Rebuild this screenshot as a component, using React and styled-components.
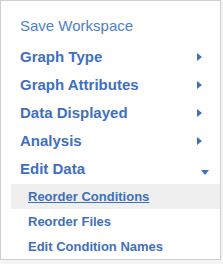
import React from "react";
import styled, { createGlobalStyle } from "styled-components";

const Global = createGlobalStyle`
  html, body { margin: 0; padding: 0; background: #f4f4f4; }
  body { font-family: "Liberation Sans", Arial, sans-serif; }
`;

const Panel = styled.nav`
  box-sizing: border-box;
  width: 221px;
  height: 260px;
  background: #fff;
  border: 1px solid #cfcfcf;
  padding-top: 10px;
  display: flex;
  flex-direction: column;
`;

const Row = styled.div`
  display: flex;
  align-items: center;
  height: 28px;
  padding-left: 19px;
  margin-bottom: ${(p) => (p.$gap ? "3px" : "0")};
  color: #4070bd;
  font-size: 15px;
  font-weight: ${(p) => (p.$bold ? 700 : 400)};
  cursor: pointer;
`;

const Label = styled.span`
  flex: 1;
  white-space: nowrap;
  color: ${(p) => (p.$light ? "#4f7fca" : "inherit")};
`;

const RightArrow = styled.span`
  width: 0;
  height: 0;
  border-left: 5px solid #4070bd;
  border-top: 4px solid transparent;
  border-bottom: 4px solid transparent;
  margin-right: 18px;
  margin-top: 2px;
`;

const DownArrow = styled.span`
  width: 0;
  height: 0;
  border-top: 5px solid #4070bd;
  border-left: 4.5px solid transparent;
  border-right: 4.5px solid transparent;
  margin-right: 11px;
  margin-top: 8px;
`;

const SubList = styled.div`
  margin-left: 10px;
  margin-top: 2px;
  display: flex;
  flex-direction: column;
`;

const SubItem = styled.div`
  height: 25px;
  display: flex;
  align-items: center;
  padding-left: 17px;
  font-size: 13px;
  font-weight: 700;
  color: #4070bd;
  background: ${(p) => (p.$active ? "#efefef" : "transparent")};
  text-decoration: ${(p) => (p.$active ? "underline" : "none")};
  white-space: nowrap;
  cursor: pointer;
`;

const items = [
  { label: "Graph Type", arrow: "right" },
  { label: "Graph Attributes", arrow: "right" },
  { label: "Data Displayed", arrow: "right" },
  { label: "Analysis", arrow: "right" },
  { label: "Edit Data", arrow: "down" },
];

const subItems = [
  { label: "Reorder Conditions", active: true },
  { label: "Reorder Files" },
  { label: "Edit Condition Names" },
];

export default function App() {
  return (
    <>
      <Global />
      <Panel>
        <Row $gap>
          <Label $light>Save Workspace</Label>
        </Row>
        {items.map((it) => (
          <Row key={it.label} $bold>
            <Label>{it.label}</Label>
            {it.arrow === "right" ? <RightArrow /> : <DownArrow />}
          </Row>
        ))}
        <SubList>
          {subItems.map((s) => (
            <SubItem key={s.label} $active={s.active}>
              {s.label}
            </SubItem>
          ))}
        </SubList>
      </Panel>
    </>
  );
}
